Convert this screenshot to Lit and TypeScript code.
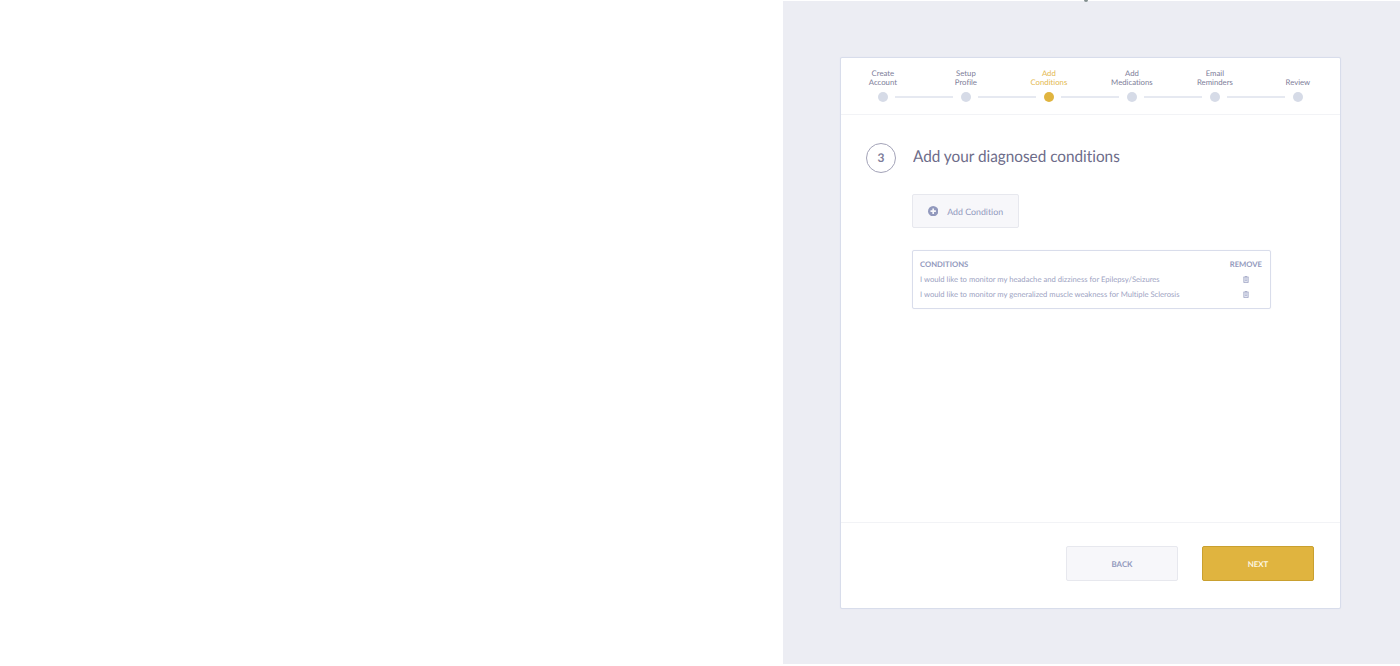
import { LitElement, html, css, svg } from "lit";
import { customElement, property } from "lit/decorators.js";
import { classMap } from "lit/directives/class-map.js";

const plusIcon = html`<svg class="plus" viewBox="0 0 20 20" width="10.4" height="10.4">
  ${svg`<circle cx="10" cy="10" r="10" fill="#9299bd"/><path d="M10 4.8v10.4M4.8 10h10.4" stroke="#f7f7fa" stroke-width="3.2"/>`}
</svg>`;

const trashIcon = html`<svg class="trash" viewBox="0 0 12 14" width="6" height="7">
  ${svg`<path d="M0 2.5h12M4 2V.7h4V2" fill="none" stroke="#8d94b9" stroke-width="1.4"/><path d="M1.6 4v9.2h8.8V4" fill="#e3e5f0" stroke="#9aa0c2" stroke-width="1.5"/><path d="M3.8 6h4.4M3.8 9h4.4" stroke="#a4aaca" stroke-width="1.3"/>`}
</svg>`;

@customElement("step-bar")
export class StepBar extends LitElement {
  @property({ type: Number }) current = 3;

  private steps = [
    ["Create", "Account"],
    ["Setup", "Profile"],
    ["Add", "Conditions"],
    ["Add", "Medications"],
    ["Email", "Reminders"],
    ["", "Review"],
  ];

  static styles = css`
    :host { display: block; }
    .steps { display: grid; grid-template-columns: repeat(6, 83px); padding: 11px 0 0 0.4px; }
    .step { display: flex; flex-direction: column; align-items: center; color: #7c7d98; }
    .label { height: 18.6px; display: flex; flex-direction: column; justify-content: flex-end; text-align: center; font-size: 7.75px; line-height: 9.3px; white-space: nowrap; }
    .track { display: grid; grid-template-columns: 1fr 10px 1fr; column-gap: 7.5px; align-items: center; width: 83px; margin-top: 4.4px; }
    .dot { width: 10px; height: 10px; border-radius: 50%; background: #d6dbe7; }
    .line { height: 2px; background: #e6e9f1; }
    .step:first-child .line:first-child, .step:last-child .line:last-child { visibility: hidden; }
    .active { color: #e3b84e; }
    .active .dot { background: #e0b43f; }
  `;

  render() {
    return html`<div class="steps">
      ${this.steps.map(
        (lines, i) => html`<div class=${classMap({ step: true, active: i + 1 === this.current })}>
          <div class="label">${lines.map((l) => (l ? html`<span>${l}</span>` : ""))}</div>
          <div class="track"><i class="line"></i><i class="dot"></i><i class="line"></i></div>
        </div>`
      )}
    </div>`;
  }
}

@customElement("app-root")
export class AppRoot extends LitElement {
  private conditions = [
    "I would like to monitor my headache and dizziness for Epilepsy/Seizures",
    "I would like to monitor my generalized muscle weakness for Multiple Sclerosis",
  ];

  static styles = css`
    :host { display: block; width: 1400px; height: 666px; overflow: hidden; position: relative; background: #fff; font-family: Lato, "Open Sans", sans-serif; font-variant-ligatures: none; text-rendering: geometricPrecision; }
    * { box-sizing: border-box; }
    .backdrop { margin: 0 0 0 783px; width: 617px; height: 664px; border-top: 1px solid #fff; background: #ecedf3; padding: 56px 0 0 57px; }
    .speck { position: absolute; left: 1084px; top: 0; width: 4px; height: 1.5px; border-radius: 0 0 2px 2px; background: #84908f; }
    .card { width: 501px; height: 552px; background: #fff; border: 1px solid #d8ddeb; border-radius: 2px; display: flex; flex-direction: column; box-shadow: 0 0 1px #dde1ee; }
    .head { height: 57px; border-bottom: 1px solid #f2f3f6; flex: none; }
    .body { flex: 1; padding: 28px 0 0 25px; }
    .title { display: flex; align-items: center; gap: 17px; height: 30px; }
    .number { width: 30px; height: 30px; border: 1px solid #a3a3b8; border-radius: 50%; display: flex; align-items: center; justify-content: center; font-size: 12px; font-weight: 700; color: #7d7c99; padding-bottom: 1px; }
    h1 { margin: 0; font-size: 16.3px; font-weight: 400; line-height: 20px; color: #6d6c89; white-space: nowrap; padding-bottom: 2px; transform: scaleX(0.94); transform-origin: left; }
    .content { padding: 21px 0 0 46px; }
    button { font-family: inherit; font-variant-ligatures: none; text-rendering: inherit; border-radius: 2px; border: 1px solid #e7e8ee; background: #f7f7fa; color: #9299bd; padding: 0; display: flex; align-items: center; justify-content: center; }
    .add { width: 107px; height: 34px; font-size: 8.8px; gap: 9px; }
    .plus, .trash { display: block; }
    .table { width: 359px; height: 59px; margin-top: 22px; border: 1px solid #d9ddeb; border-radius: 2px; padding: 6px 8px 0 7px; color: #9ca2c2; font-size: 7.66px; box-shadow: 0 0 1px #e4e6f0; }
    .row { display: flex; justify-content: space-between; align-items: center; height: 15px; white-space: nowrap; }
    .row > span:first-child, .heading > span { padding-bottom: 1.4px; }
    .heading { font-weight: 700; color: #9299bd; }
    .cell { width: 33px; display: flex; justify-content: center; }
    .foot { height: 86px; flex: none; border-top: 1px solid #f2f3f6; display: flex; justify-content: flex-end; gap: 24px; padding: 23px 26px 0 0; }
    .foot button { width: 112px; height: 35px; font-size: 7.9px; font-weight: 700; padding-bottom: 0; }
    .foot .next { background: #e0b43f; border-color: #c9a02f; color: #fdf6e2; }
  `;

  render() {
    return html`
      <div class="backdrop">
        <section class="card">
          <header class="head"><step-bar .current=${3}></step-bar></header>
          <main class="body">
            <div class="title"><span class="number">3</span><h1>Add your diagnosed conditions</h1></div>
            <div class="content">
              <button class="add">${plusIcon}<span>Add Condition</span></button>
              <div class="table">
                <div class="row heading"><span>CONDITIONS</span><span>REMOVE</span></div>
                ${this.conditions.map((c) => html`<div class="row"><span>${c}</span><span class="cell">${trashIcon}</span></div>`)}
              </div>
            </div>
          </main>
          <footer class="foot"><button>BACK</button><button class="next">NEXT</button></footer>
        </section>
      </div>
      <i class="speck"></i>
    `;
  }
}
